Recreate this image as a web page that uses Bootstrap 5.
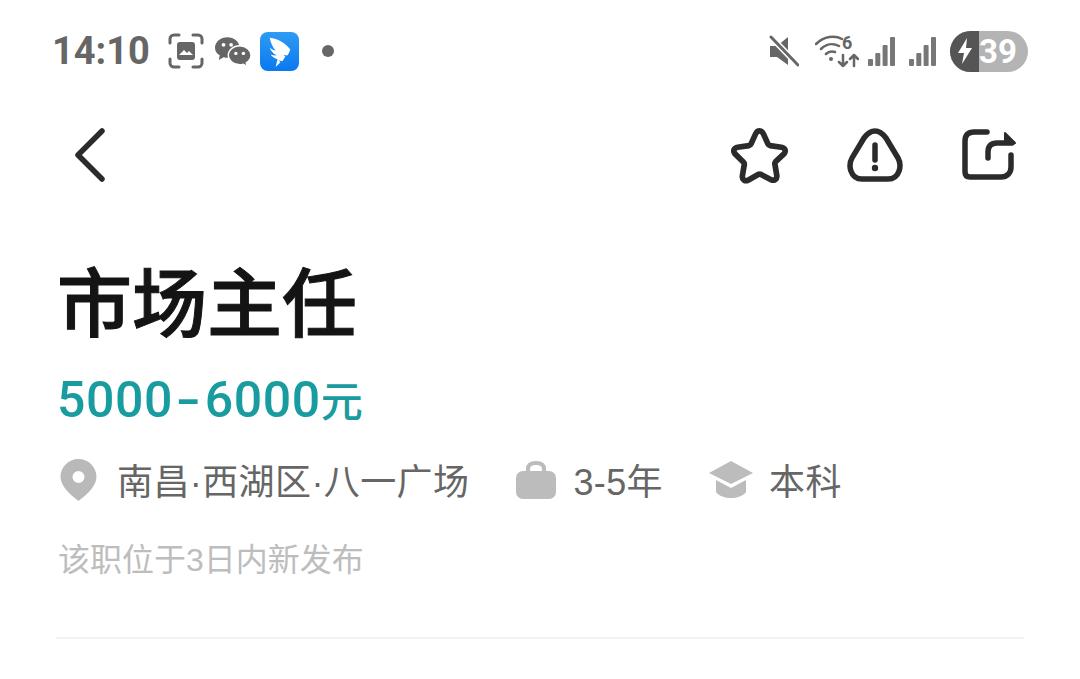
<!DOCTYPE html>
<html lang="zh-CN">
<head>
    <meta charset="UTF-8">
    <title>市场主任</title>
    <link href="https://cdn.jsdelivr.net/npm/bootstrap@5.3.0/dist/css/bootstrap.min.css" rel="stylesheet">
    <style>
        body {
            background: #fff;
            font-family: "Liberation Sans", "Noto Sans CJK SC", sans-serif;
            overflow: hidden;
        }
        .status-bar {
            height: 102px;
            padding: 0 52px;
        }
        .status-time {
            font-family: Roboto, sans-serif;
            font-size: 38px;
            font-weight: 700;
            color: #666;
            line-height: 1;
            width: 116px;
        }
        .status-dot {
            width: 12px;
            height: 12px;
            background: #666;
            margin-left: 23px;
        }
        .gap-wechat { margin-left: 11px; }
        .gap-ding { margin-left: 9px; }
        .gap-wifi { margin-left: 16px; }
        .gap-sig { margin-left: 9px; }
        .gap-sig2 { margin-left: 14px; }
        .batt-pill {
            width: 78px;
            height: 41px;
            border-radius: 21px;
            overflow: hidden;
            background: #b4b4b4;
            margin-left: 14px;
        }
        .batt-bolt {
            width: 29px;
            background: #555;
        }
        .batt-num {
            flex: 1;
            color: #fff;
            font-family: Roboto, sans-serif;
            font-size: 33px;
            font-weight: 700;
            line-height: 1;
            padding-right: 11px;
        }
        .tool-bar {
            height: 106px;
            padding: 0 64px 0 73px;
        }
        .gap-alert { margin-left: 58px; }
        .gap-share { margin-left: 58px; }
        .job-head {
            padding: 0 56px;
        }
        .job-title {
            font-family: "Noto Sans CJK SC", sans-serif;
            font-size: 75px;
            font-weight: 500;
            -webkit-text-stroke: 1px #141414;
            color: #141414;
            line-height: 100px;
            margin: 0 0 0 1px;
            padding-top: 41px;
        }
        .job-pay {
            font-family: Roboto, "Noto Sans CJK SC", sans-serif;
            font-size: 50px;
            font-weight: 500;
            color: #189c9f;
            line-height: 60px;
            margin: 20px 0 0 1px;
            letter-spacing: .6px;
        }
        .pay-dash {
            display: inline-block;
            transform: scaleX(1.45);
            margin: 0 7px;
        }
        .pay-unit {
            font-family: "Noto Sans CJK SC", sans-serif;
            font-size: 42px;
        }
        .job-meta {
            margin: 28px 0 0 4px;
            font-size: 36px;
            color: #666;
            line-height: 50px;
            letter-spacing: .4px;
        }
        .job-meta svg { margin-bottom: 7px; }
        .gap-pin { margin-right: 20px; }
        .gap-bag { margin-left: 47px; margin-right: 17px; }
        .gap-cap { margin-left: 46px; margin-right: 16px; }
        .job-note {
            font-size: 32px;
            color: #bdbdbd;
            line-height: 44px;
            margin: 30px 0 0 2px;
        }
        .job-rule {
            border-top: 2px solid #f2f2f2;
            margin-top: 55px;
        }
    </style>
</head>
<body>
    <div class="status-bar d-flex align-items-center">
        <span class="status-time">14:10</span>
        <svg width="36" height="36" viewBox="0 0 36 36" fill="none">
            <path d="M2 10V6a4 4 0 0 1 4-4h5M25 2h5a4 4 0 0 1 4 4v4M34 26v4a4 4 0 0 1-4 4h-5M11 34H6a4 4 0 0 1-4-4v-4" stroke="#666" stroke-width="3" stroke-linecap="round"/>
            <rect x="9" y="9" width="18" height="18" rx="3" fill="#666"/>
            <path d="M11 22l5-5 3 3 2-2 4 4z" fill="#fff"/>
        </svg>
        <svg width="36" height="31" viewBox="0 0 38 32" class="gap-wechat">
            <path d="M13 1C6 1 0 6 0 12c0 4 2 6 5 8l-1 5 5-3c2 .5 3 .6 5 .6C20 22 26 17 26 12 26 6 20 1 13 1z" fill="#666"/>
            <path d="M26 10c-7 0-12 5-12 10s5 10 12 10c1.500 0 3-.3 4-.6l4 2.600-1-4c3-2 5-5 5-8 0-5-5-10-12-10z" fill="#666" stroke="#fff" stroke-width="1.500"/>
            <circle cx="9" cy="9" r="2" fill="#fff"/><circle cx="17" cy="9" r="2" fill="#fff"/>
            <circle cx="22" cy="18" r="1.800" fill="#fff"/><circle cx="30" cy="18" r="1.800" fill="#fff"/>
        </svg>
        <svg width="39" height="39" viewBox="0 0 40 40" class="gap-ding">
            <defs><linearGradient id="dingBg" x1="0" y1="0" x2="0" y2="1"><stop offset="0" stop-color="#2f9bf4"/><stop offset="1" stop-color="#0a78f0"/></linearGradient></defs>
            <rect width="40" height="40" rx="8" fill="url(#dingBg)"/>
            <path d="M10 6c8 1 16 5 21 12-1 3-2 5-3 6l-4-.5 2 1.500-3 5-4-1 2 2-5 5 2-8c-3-1-6-3-7-5 2 1 4 1 6 1-4-2-6-5-7-8 2 2 4 3 6 3-3-3-5-8-6-13z" fill="#fff"/>
        </svg>
        <span class="status-dot d-inline-block rounded-circle"></span>
        <div class="ms-auto d-flex align-items-center">
            <svg width="30" height="32" viewBox="0 0 30 32">
                <path d="M1 11h7l11-9v28l-11-8H1z" fill="#666"/>
                <path d="M2 2l27 28" stroke="#fff" stroke-width="6"/>
                <path d="M2 2l27 28" stroke="#666" stroke-width="3" stroke-linecap="round"/>
            </svg>
            <svg width="44" height="38" viewBox="0 0 44 38" fill="none" class="gap-wifi">
                <path d="M1 12C9 4 20 3 27 7M6 17c5-5 12-6 18-3M11 22c3-3 6-3 9-2" stroke="#666" stroke-width="2.500" stroke-linecap="round"/>
                <circle cx="16" cy="27" r="2" fill="#666"/>
                <text x="27" y="17" font-family="Roboto, sans-serif" font-size="18" font-weight="700" fill="#666">6</text>
                <path d="M28 23v11M24 30l4 4 4-4M39 34V23M35 27l4-4 4 4" stroke="#666" stroke-width="2.500" stroke-linecap="round" stroke-linejoin="round"/>
            </svg>
            <svg width="27" height="30" viewBox="0 0 27 30" class="gap-sig">
                <rect x="0" y="23" width="5" height="7" rx="1" fill="#777"/><rect x="7.300" y="17" width="5" height="13" rx="1" fill="#777"/><rect x="14.600" y="9" width="5" height="21" rx="1" fill="#777"/><rect x="22" y="1" width="5" height="29" rx="1" fill="#777"/>
            </svg>
            <svg width="27" height="30" viewBox="0 0 27 30" class="gap-sig2">
                <rect x="0" y="23" width="5" height="7" rx="1" fill="#777"/><rect x="7.300" y="17" width="5" height="13" rx="1" fill="#777"/><rect x="14.600" y="9" width="5" height="21" rx="1" fill="#777"/><rect x="22" y="1" width="5" height="29" rx="1" fill="#777"/>
            </svg>
            <div class="batt-pill d-flex">
                <div class="batt-bolt d-flex align-items-center justify-content-center">
                    <svg width="16" height="26" viewBox="0 0 16 26"><path d="M10 0L1 15h6l-2 11 10-16H9z" fill="#fff"/></svg>
                </div>
                <div class="batt-num d-flex align-items-center justify-content-center">39</div>
            </div>
        </div>
    </div>

    <div class="tool-bar d-flex align-items-center">
        <svg width="34" height="56" viewBox="0 0 34 56" fill="none">
            <path d="M29 4L5 28l24 24" stroke="#2b2b2b" stroke-width="5.500" stroke-linecap="round" stroke-linejoin="round"/>
        </svg>
        <svg width="57" height="57" viewBox="0 0 60 60" fill="none" class="ms-auto">
            <path d="M30 4c2 0 3 1 4 3l5 11c.5 1 1 1.500 2 1.600l12 1.700c4 .6 5 4 3 6.700l-9 8.500c-.7.7-1 1.500-.8 2.500l2 12c.6 4-3 6-6 4.500l-10.600-5.600c-1-.5-2-.5-3 0L18 56c-3 1.500-6.600-.5-6-4.500l2-12c.2-1-.1-1.800-.8-2.500L4 28c-2-2.700-1-6.100 3-6.700l12-1.700c1-.1 1.500-.6 2-1.600l5-11c1-2 2-3 4-3z" stroke="#2b2b2b" stroke-width="6" stroke-linejoin="round"/>
        </svg>
        <svg width="58" height="54" viewBox="0 0 58 54" fill="none" class="gap-alert">
            <path d="M29 3c5 0 8 3 11 7l12 20c4 7 2 21-10 21H16C4 51 2 37 6 30L18 10c3-4 6-7 11-7z" stroke="#2b2b2b" stroke-width="5.500" stroke-linejoin="round"/>
            <path d="M29 17v15" stroke="#2b2b2b" stroke-width="5.500" stroke-linecap="round"/>
            <circle cx="29" cy="40" r="3.200" fill="#2b2b2b"/>
        </svg>
        <svg width="54" height="52" viewBox="0 0 54 52" fill="none" class="gap-share">
            <path d="M25 3H12C6 3 3 6 3 12v31c0 3 1.500 5 5 5h31c6 0 10-4 10-10V26" stroke="#2b2b2b" stroke-width="5.500" stroke-linecap="round" stroke-linejoin="round"/>
            <path d="M26 29v-6c0-6 3-9 9-9h15" stroke="#2b2b2b" stroke-width="5.500" stroke-linecap="round"/>
            <path d="M43 4l10 10-10 1z" fill="#2b2b2b" stroke="#2b2b2b" stroke-width="2" stroke-linejoin="round"/>
        </svg>
    </div>

    <div class="job-head">
        <h1 class="job-title">市场主任</h1>
        <p class="job-pay">5000<span class="pay-dash">-</span>6000<span class="pay-unit">元</span></p>
        <div class="job-meta d-flex align-items-center">
            <svg width="37" height="42" viewBox="0 0 36 42" class="gap-pin">
                <path fill-rule="evenodd" d="M18 0c10 0 18 8 18 18 0 9-10 18-18 24C10 36 0 27 0 18 0 8 8 0 18 0zm0 12a6 6 0 1 0 0 12 6 6 0 0 0 0-12z" fill="#b9b9b9"/>
            </svg>
            <span>南昌·西湖区·八一广场</span>
            <svg width="40" height="38" viewBox="0 0 40 38" class="gap-bag">
                <path d="M12 12V8c0-4 3-6 8-6s8 2 8 6v4" fill="none" stroke="#bcbcbc" stroke-width="4"/>
                <rect y="10" width="40" height="28" rx="7" fill="#bcbcbc"/>
            </svg>
            <span>3-5年</span>
            <svg width="44" height="38" viewBox="0 0 44 38" class="gap-cap">
                <path d="M22 0l22 12-22 11L0 12z" fill="#bcbcbc"/>
                <path d="M7 19l15 8 15-8v12c-3 4-9 6-15 6S10 35 7 31z" fill="#bcbcbc"/>
            </svg>
            <span>本科</span>
        </div>
        <p class="job-note">该职位于3日内新发布</p>
        <div class="job-rule"></div>
    </div>
</body>
</html>
